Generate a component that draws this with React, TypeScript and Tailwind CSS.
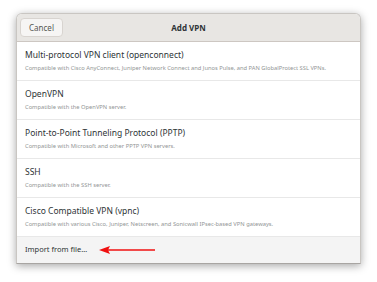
import React from "react";

const rows = [
  {
    title: "Multi-protocol VPN client (openconnect)",
    sub: "Compatible with Cisco AnyConnect, Juniper Network Connect and Junos Pulse, and PAN GlobalProtect SSL VPNs.",
  },
  { title: "OpenVPN", sub: "Compatible with the OpenVPN server." },
  {
    title: "Point-to-Point Tunneling Protocol (PPTP)",
    sub: "Compatible with Microsoft and other PPTP VPN servers.",
  },
  { title: "SSH", sub: "Compatible with the SSH server." },
  {
    title: "Cisco Compatible VPN (vpnc)",
    sub: "Compatible with various Cisco, Juniper, Netscreen, and Sonicwall IPsec-based VPN gateways.",
  },
];

const App = () => {
  return (
    <div
      className="w-[377px] h-[282px] bg-white pt-[13px] pl-[16px]"
      style={{ fontFamily: '"Noto Sans", "Open Sans", sans-serif' }}
    >
      <div className="w-[345px] rounded-t-[6px] bg-white shadow-[0_2px_8px_rgba(0,0,0,0.35)] border border-[#c9c6c2] border-b-[#a8a5a2] overflow-hidden">
        <div className="h-[28px] bg-[#e8e6e3] border-b border-[#cdc7c2] flex items-center px-[3px] relative">
          <div className="h-[19px] w-[43px] rounded-[4px] bg-[#f6f5f4] border border-[#d8d4d0] flex items-center justify-center text-[8px] text-[#555753]">
            Cancel
          </div>
          <div className="absolute inset-0 flex items-center justify-center text-[8px] font-bold text-[#2e3436] pointer-events-none">
            Add VPN
          </div>
        </div>
        {rows.map((r) => (
          <div
            key={r.title}
            className="h-[39px] border-b border-[#e8e8e8] px-[8px] flex flex-col justify-center"
          >
            <div className="text-[8.5px] leading-[12px] text-[#2e3436]">{r.title}</div>
            <div className="text-[5.75px] leading-[9px] mt-[3px] text-[#929595] whitespace-nowrap">
              {r.sub}
            </div>
          </div>
        ))}
        <div className="h-[26px] bg-[#f4f4f4] px-[8px] flex items-center">
          <span className="text-[7.5px] text-[#2e3436]">Import from file…</span>
          <svg width="58" height="10" viewBox="0 0 58 10" className="ml-[12px]">
            <line x1="8" y1="5" x2="56" y2="5" stroke="#f01010" strokeWidth="1.3" />
            <polygon points="0,5 11,1 9,5 11,9" fill="#f01010" />
          </svg>
        </div>
      </div>
    </div>
  );
};

export default App;
